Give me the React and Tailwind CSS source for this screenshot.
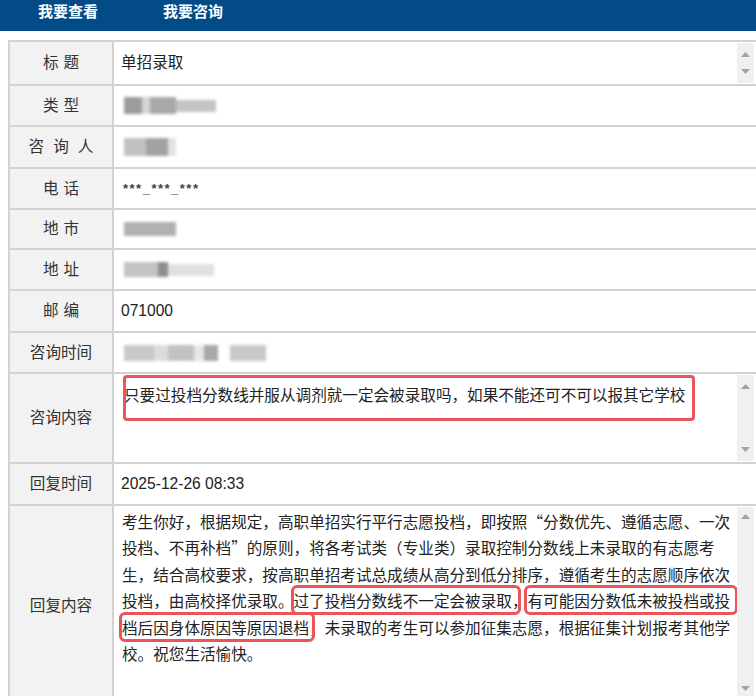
const red = "outline-[3px] outline-solid outline-[#e9555a] rounded-[3px]";

function Arrow({ down }) {
  return (
    <svg width="9" height="5" viewBox="0 0 9 5" className="block">
      {down ? <path d="M0 0h9L4.5 5z" fill="#a3a3a3" /> : <path d="M0 5h9L4.5 0z" fill="#a3a3a3" />}
    </svg>
  );
}

function Scrollbar({ className }) {
  return (
    <div className={"w-[17px] shrink-0 mr-[4px] bg-[#f0f0f0] flex flex-col items-center justify-between " + className}>
      <Arrow />
      <Arrow down />
    </div>
  );
}

function Label({ chars, gap = "gap-[5px]" }) {
  return (
    <div className="w-[104px] shrink-0 bg-[#f2f2f2] border-r-2 border-[#d2d2d2] flex items-center justify-center text-[#333]">
      <div className={"flex " + gap}>
        {chars.map((c) => (
          <span key={c}>{c}</span>
        ))}
      </div>
    </div>
  );
}

function Row({ h, children }) {
  return <div className={"flex border-b-2 border-[#d2d2d2] " + h}>{children}</div>;
}

function Blur({ blocks }) {
  return (
    <div className="flex items-center pl-[10px] blur-[1.5px]">
      {blocks.map((b, i) => (
        <div key={i} className={b} />
      ))}
    </div>
  );
}

export default function App() {
  return (
    <div className="w-[756px] h-[696px] overflow-hidden bg-white font-['Liberation_Sans','Noto_Sans_CJK_SC',sans-serif] text-[15.6px] text-[#222]">
      <div className="h-[31px] bg-[#034b87] flex text-white font-bold text-[15px] leading-[18px] pt-[3px]">
        <span className="ml-[38px]">我要查看</span>
        <span className="ml-[65px]">我要咨询</span>
      </div>

      <div className="mt-[9px] ml-[8px] w-[750px] border-l-2 border-t-2 border-[#d2d2d2]">
        <Row h="h-[44px]">
          <Label chars={["标", "题"]} />
          <div className="flex-1 flex">
            <div className="flex-1 flex items-center pl-[7px]">单招录取</div>
            <Scrollbar className="my-[1px] py-[9px]" />
          </div>
        </Row>

        <Row h="h-[41px]">
          <Label chars={["类", "型"]} />
          <Blur blocks={["w-[18px] h-[17px] bg-[#9c9c9c]", "w-[8px] h-[17px] bg-[#d6d6d6]", "w-[26px] h-[17px] bg-[#a8a8a8]", "w-[40px] h-[12px] bg-[#c4c4c4]"]} />
        </Row>

        <Row h="h-[42px]">
          <Label chars={["咨", "询", "人"]} gap="gap-[9px]" />
          <Blur blocks={["w-[22px] h-[18px] bg-[#c2c2c2]", "w-[22px] h-[18px] bg-[#a2a2a2]", "w-[8px] h-[18px] bg-[#e2e2e2]"]} />
        </Row>

        <Row h="h-[41px]">
          <Label chars={["电", "话"]} />
          <div className="flex items-center pl-[9px] text-[13px] font-bold tracking-[1.5px] text-[#444]">***_***_***</div>
        </Row>

        <Row h="h-[40px]">
          <Label chars={["地", "市"]} />
          <Blur blocks={["w-[52px] h-[14px] bg-[#b0b0b0]"]} />
        </Row>

        <Row h="h-[41px]">
          <Label chars={["地", "址"]} />
          <Blur blocks={["w-[34px] h-[15px] bg-[#c4c4c4]", "w-[10px] h-[15px] bg-[#8e8e8e]", "w-[46px] h-[12px] bg-[#e0e0e0]"]} />
        </Row>

        <Row h="h-[42px]">
          <Label chars={["邮", "编"]} />
          <div className="flex items-center pl-[7px]">071000</div>
        </Row>

        <Row h="h-[41px]">
          <Label chars={["咨询时间"]} />
          <Blur blocks={["w-[30px] h-[16px] bg-[#c8c8c8]", "w-[14px] h-[16px] bg-[#dcdcdc]", "w-[26px] h-[16px] bg-[#c2c2c2]", "w-[10px] h-[16px] bg-[#e6e6e6]", "w-[14px] h-[16px] bg-[#a8a8a8]", "w-[12px] h-[16px] bg-white", "w-[36px] h-[16px] bg-[#c8c8c8]"]} />
        </Row>

        <Row h="h-[90px]">
          <Label chars={["咨询内容"]} />
          <div className="flex-1 flex">
            <div className="flex-1 relative pl-[10px] pt-[9px] leading-[26px]">
              只要过投档分数线并服从调剂就一定会被录取吗，如果不能还可不可以报其它学校
              <div className="absolute left-[9px] top-[1px] w-[572px] h-[46px] border-[3px] border-[#e9555a] rounded-[4px]" />
            </div>
            <Scrollbar className="my-[1px] py-[9px]" />
          </div>
        </Row>

        <Row h="h-[42px]">
          <Label chars={["回复时间"]} />
          <div className="flex items-center pl-[7px]">2025-12-26 08:33</div>
        </Row>

        <div className="flex h-[200px]">
          <Label chars={["回复内容"]} />
          <div className="flex-1 flex">
            <div className="flex-1 pl-[8px] pt-[2px] leading-[26.4px] whitespace-nowrap font-['Noto_Sans_CJK_SC',sans-serif]">
              <div>考生你好，根据规定，高职单招实行平行志愿投档，即按照“分数优先、遵循志愿、一次</div>
              <div>投档、不再补档”的原则，将各考试类（专业类）录取控制分数线上未录取的有志愿考</div>
              <div>生，结合高校要求，按高职单招考试总成绩从高分到低分排序，遵循考生的志愿顺序依次</div>
              <div>
                投档，由高校择优录取。
                <span className={red + " py-[1px] pr-[6px] -mr-[6px]"}>过了投档分数线不一定会被录取</span>
                ，
                <span className={red + " py-[1px] pr-[5px] -mr-[5px]"}>有可能因分数低未被投档或投</span>
              </div>
              <div>
                <span className={red + " py-[1px] pr-[3px] -mr-[3px]"}>档后因身体原因等原因退档</span>
                ，未录取的考生可以参加征集志愿，根据征集计划报考其他学
              </div>
              <div>校。祝您生活愉快。</div>
            </div>
            <Scrollbar className="mt-[1px] h-[190px] pt-[7px] pb-[6px]" />
          </div>
        </div>
      </div>
    </div>
  );
}
